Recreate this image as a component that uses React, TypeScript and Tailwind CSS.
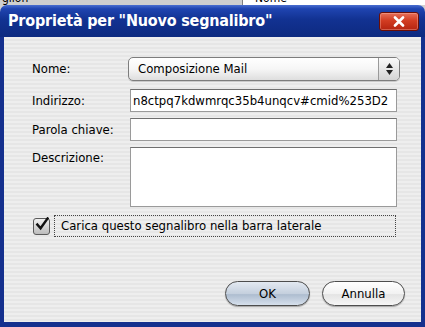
import React from "react"

const ui = { fontFamily: '"DejaVu Sans Condensed", "DejaVu Sans", sans-serif' }

function Field({ value = "", tall = false }: { value?: string; tall?: boolean }) {
  return (
    <div
      className={
        "ml-[2px] w-[267px] border border-[#9a9a9a] border-t-[#6f6f6f] bg-white px-[2px] text-[13px] leading-[21px] text-black overflow-hidden whitespace-nowrap " +
        (tall ? "h-[60px]" : "h-[23px]")
      }
    >
      {value}
    </div>
  )
}

function CloseButton() {
  return (
    <div className="flex h-[19px] w-[40px] items-center justify-center rounded-[3px] border border-[#6b0d05] bg-[linear-gradient(to_bottom,#e8705a_0%,#d23c22_45%,#b52410_100%)] shadow-[inset_0_0_0_1px_rgba(255,200,190,0.35)]">
      <svg width="12" height="11" viewBox="0 0 12 11">
        <path d="M2 1.5 L10 9.5 M10 1.5 L2 9.5" stroke="white" strokeWidth="2.6" strokeLinecap="round" />
      </svg>
    </div>
  )
}

export default function App() {
  return (
    <div className="flex h-[327px] w-[425px] flex-col overflow-hidden bg-[#d0d0d0]" style={ui}>
      {/* strip of the window behind */}
      <div className="flex h-[5px] overflow-hidden text-[12px] leading-[12px] text-black">
        <div className="-mt-[8px] w-[243px] bg-[#cfcfcf] pl-[2px] border-r border-[#808080]">glion</div>
        <div className="-mt-[8px] flex-1 bg-white pl-[12px]">Nome</div>
      </div>

      <div className="flex flex-1 flex-col">
        {/* title bar */}
        <div className="flex h-[32px] items-center justify-between rounded-t-[7px] bg-[linear-gradient(to_bottom,#4a6ed0_0%,#1f44b0_12%,#123292_45%,#0d2a80_100%)] pl-[8px] pr-[6px]">
          <span className="text-[16px] font-bold text-white tracking-[-0.2px]">
            Proprietà per "Nuovo segnalibro"
          </span>
          <CloseButton />
        </div>

        {/* body */}
        <div className="flex flex-1 flex-col border-x-[4px] border-b-[5px] border-[#15308e] bg-[repeating-linear-gradient(to_bottom,#eeeeee_0px,#eeeeee_2px,#e6e6e6_2px,#e6e6e6_4px)] pl-[28px] pt-[20px] text-[13px] text-black">
          <div className="flex items-center">
            <div className="w-[96px]">Nome:</div>
            <div className="flex h-[24px] w-[272px] items-stretch overflow-hidden rounded-[5px] border border-[#7d7d7d] bg-[linear-gradient(to_bottom,#ffffff_0%,#f6f6f6_50%,#dedede_100%)] shadow-[0_1px_0_rgba(0,0,0,0.15)]">
              <div className="flex-1 pl-[9px] leading-[22px]">Composizione Mail</div>
              <div className="flex w-[21px] flex-col items-center justify-center gap-[2px] border-l border-[#9a9a9a] bg-[linear-gradient(to_bottom,#fafafa,#d4d4d4)]">
                <svg width="7" height="5" viewBox="0 0 7 5"><path d="M3.5 0 L7 5 L0 5 Z" fill="#222" /></svg>
                <svg width="7" height="5" viewBox="0 0 7 5"><path d="M0 0 L7 0 L3.5 5 Z" fill="#222" /></svg>
              </div>
            </div>
          </div>

          <div className="mt-[8px] flex items-center">
            <div className="w-[96px]">Indirizzo:</div>
            <Field value="n8ctpq7kdwmrqc35b4unqcv#cmid%253D2" />
          </div>

          <div className="mt-[6px] flex items-center">
            <div className="w-[96px]">Parola chiave:</div>
            <Field />
          </div>

          <div className="mt-[6px] flex items-start">
            <div className="w-[96px] pt-[1px]">Descrizione:</div>
            <Field tall />
          </div>

          <div className="mt-[8px] flex items-center">
            <div className="ml-[1px] flex h-[17px] w-[17px] items-center justify-center rounded-[3px] border border-[#5a5a5a] bg-[linear-gradient(to_bottom,#f0f0f0,#bcbcbc)]">
              <svg width="15" height="15" viewBox="0 0 15 15" className="-mt-[3px] ml-[1px]">
                <path d="M2.5 7.5 L6 11.5 L13.5 1" stroke="#111" strokeWidth="2.6" fill="none" strokeLinecap="square" />
              </svg>
            </div>
            <div className="ml-[4px] flex h-[22px] w-[342px] items-center border border-dotted border-[#444] pl-[6px]">
              Carica questo segnalibro nella barra laterale
            </div>
          </div>

          <div className="mt-[44px] flex justify-end gap-[12px] pr-[16px]">
            <div className="flex h-[25px] w-[85px] items-center justify-center rounded-full border border-[#4d4d4d] bg-[linear-gradient(to_bottom,#e3e9f1_0%,#c5d0de_50%,#aebdd0_55%,#d6e0ec_100%)] shadow-[0_1px_1px_rgba(0,0,0,0.3)]">
              OK
            </div>
            <div className="flex h-[25px] w-[83px] items-center justify-center rounded-full border border-[#4d4d4d] bg-[linear-gradient(to_bottom,#ffffff_0%,#f2f2f2_50%,#e4e4e4_55%,#f6f6f6_100%)] shadow-[0_1px_1px_rgba(0,0,0,0.3)]">
              Annulla
            </div>
          </div>
        </div>
      </div>
    </div>
  )
}
